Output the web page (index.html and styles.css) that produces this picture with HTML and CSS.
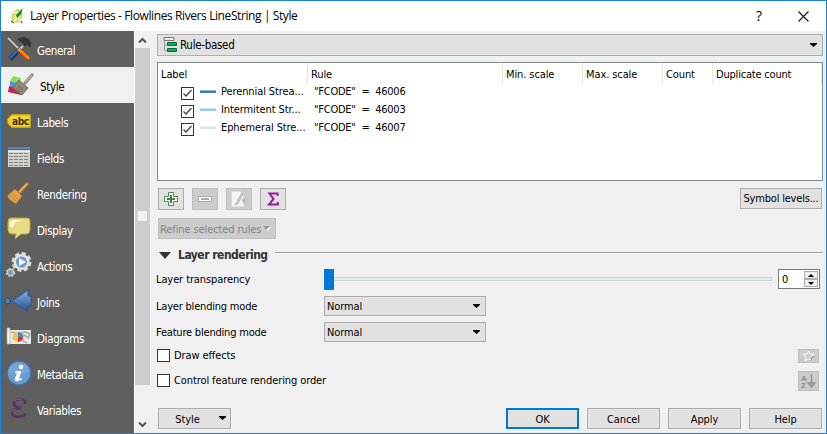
FILE: index.html
```html
<!DOCTYPE html>
<html lang="en">
<head>
<meta charset="utf-8">
<title>Layer Properties</title>
<link rel="stylesheet" href="styles.css">
</head>
<body>
<div class="window">
  <header class="titlebar">
    <svg class="app-icon" width="16" height="18" viewBox="0 0 16 18"><ellipse cx="7" cy="9" rx="4.8" ry="6.5" transform="rotate(18 7 9)" fill="#dce66e" stroke="#a5b84a" stroke-width=".6"/><path d="M4 15L8 7M3 5l5 1M8 12l4 1" stroke="#f6f8d0" stroke-width="1.5"/><path d="M13 1L6 8l1 3 4-4z" fill="#15842b"/><path d="M1 14l3 2M11 14l1 2" stroke="#57612a" stroke-width="1.3"/></svg>
    <span class="title">Layer Properties - Flowlines Rivers LineString | Style</span>
    <span class="help">?</span>
    <svg class="close" width="11" height="11" viewBox="0 0 11 11"><path d="M.5.5l10 10M10.500.5l-10 10" stroke="#111" stroke-width="1.1"/></svg>
  </header>
  <div class="body">
    <nav class="sidebar">
      <div class="item"><svg width="26" height="26" viewBox="0 0 26 26"><path d="M2 2l10 10" stroke="#d5d8da" stroke-width="1.6"/><path d="M17 10L7 20" stroke="#c9cdd0" stroke-width="2"/><path d="M12 3q6-3 10 0l3 4-1 4-3-3-2 2-2-3-2-1z" fill="#343638" stroke="#1f2021" stroke-width=".5"/><path d="M12 15L4 23" stroke="#183867" stroke-width="5"/><path d="M11 15L4 22" stroke="#3a70b5" stroke-width="2.200"/><path d="M13 14l10 9" stroke="#bd4700" stroke-width="4.600"/><path d="M13 13.500l10 9" stroke="#ff8a20" stroke-width="2.400"/></svg><span>General</span></div>
      <div class="item active"><svg width="28" height="26" viewBox="0 0 28 26"><path d="M6 4l8 2-2 6-9-3z" fill="#8be04c"/><path d="M3 9l12 3-3 5-9-3z" fill="#5a92d6"/><path d="M2 14l13 3-1 6-13-3z" fill="#b92a4e"/><path d="M12 8l9 8-6 7-9-7z" fill="#8f8b78" stroke="#716e60"/><path d="M11 14l5 4M9 16l5 4" stroke="#656356"/><path d="M18 11L25 3" stroke="#8e8a74" stroke-width="3.400" stroke-linecap="round"/><path d="M18 10L25 3" stroke="#bcb79e" stroke-width="1.200"/></svg><span>Style</span></div>
      <div class="item"><svg width="26" height="26" viewBox="0 0 26 26"><path d="M6 7h18v12H6l-4-4v-4z" fill="#f2d331" stroke="#e6bd00" stroke-width="1.300" stroke-linejoin="round"/><text x="6" y="16.500" class="abc">abc</text></svg><span>Labels</span></div>
      <div class="item"><svg width="26" height="26" viewBox="0 0 26 26"><path d="M2 3h22v20H2z" fill="#d1d1cc"/><path d="M2 3h22v3H2z" fill="#416ca9"/><path d="M2 4h22" stroke="#6e9cd3"/><path d="M2 7.500h22" stroke="#f0f0ed"/><path d="M3 9.500h20M3 12.500h20M3 15.500h20M3 18.500h20M3 21.500h20" stroke="#83847f" stroke-dasharray="4 1"/></svg><span>Fields</span></div>
      <div class="item"><svg width="26" height="26" viewBox="0 0 26 26"><path d="M13 13L21 4" stroke="#ad742c" stroke-width="3.600" stroke-linecap="round"/><path d="M13 12L21 4" stroke="#edb866" stroke-width="1.600" stroke-linecap="round"/><path d="M9 9l7 7-6 8Q5 22 1 16z" fill="#dfa14d" stroke="#af742c"/><path d="M10 10l6 6M6 13l6 6M4 15l6 6" stroke="#ba7d32" stroke-width=".7"/></svg><span>Rendering</span></div>
      <div class="item"><svg width="26" height="26" viewBox="0 0 26 26"><path d="M5 2h16q3 0 3 3v9q0 4-4 4h-5l-6 5 1-5H6q-4 0-4-4V6q0-4 3-4z" fill="#e8db86" stroke="#bca537"/><path d="M4 10q0-7 7-6h7q-11 0-11 8z" fill="#fffdea"/></svg><span>Display</span></div>
      <div class="item gears"><svg width="28" height="28" viewBox="0 0 28 28"><circle cx="16.500" cy="11" r="8.800" fill="none" stroke="#d9d9d5" stroke-width="2.400" stroke-dasharray="4.200 2.700"/><circle cx="16.500" cy="11" r="6.800" fill="#699ad0" stroke="#e4e4df" stroke-width="2.600"/><path d="M14 7l7 4-7 4z" fill="#fff"/><circle cx="5.500" cy="21.500" r="4" fill="none" stroke="#c2c2be" stroke-width="1.500" stroke-dasharray="2 1.300"/><circle cx="5.500" cy="21.500" r="3" fill="#6b9bcc" stroke="#c7c7c2" stroke-width="1.300"/></svg><span>Actions</span></div>
      <div class="item join"><svg width="28" height="26" viewBox="0 0 28 26"><defs><linearGradient id="join" x1="0" y1="0" x2="0" y2="1"><stop stop-color="#83b4e4"/><stop offset="1" stop-color="#244d8b"/></linearGradient></defs><path d="M7 13h4" stroke="#355d91" stroke-width="1.600"/><circle cx="3.600" cy="13" r="3" fill="#4b7db7" stroke="#294e80"/><path d="M8 13L24 2v6h3v10h-3v6z" fill="url(#join)" stroke="#2a5799"/></svg><span>Joins</span></div>
      <div class="item"><svg width="26" height="26" viewBox="0 0 26 26"><path d="M3 6h22v14H3z" fill="#e7e7e3"/><path d="M5 8l4 1 1 3-3 3M15 9l4-1 5 2-2 4-4-3-2 2 1 4 4 2" fill="none" stroke="#afb0aa" stroke-width="1.800"/><path d="M1 4h3v16H1z" fill="#f5f5f2" stroke="#aaa" stroke-width=".7"/><circle cx="12" cy="13" r="5" fill="#f2c939"/><path d="M12 13V8q5 0 5 5z" fill="#4b83c4"/><path d="M12 13h5q0 4-5 5z" fill="#e62d35"/></svg><span>Diagrams</span></div>
      <div class="item"><svg width="26" height="26" viewBox="0 0 26 26"><circle cx="13" cy="13" r="11.800" fill="#699bd3" stroke="#3d73b1" stroke-width="1.200"/><path d="M3 12Q4 3 13 3t10 9q-8 4-20 0z" fill="#80addd" opacity=".6"/><circle cx="15" cy="7" r="2.200" fill="#fff"/><path d="M10 11h5.500l-2.500 8 3-1v1.500l-5 2q-3-.5-2-3.500l2-5h-2z" fill="#fff"/></svg><span>Metadata</span></div>
      <div class="item"><svg width="26" height="26" viewBox="0 0 26 26"><path d="M19 8V5Q14 2 9 5q-4 5 6 7H13Q5 13 6 18q4 5 13 1v-2" fill="none" stroke="#5d3269" stroke-width="2.600"/><path d="M8 5q3-3 8-1M6 16q0-2 4-3" fill="none" stroke="#94669e" stroke-width=".8"/></svg><span>Variables</span></div>
    </nav>
    <div class="scrollbar">
      <svg class="up" width="9" height="7" viewBox="0 0 9 7"><path d="M1 5.500l3.500-3.500 3.500 3.500" fill="none" stroke="#555" stroke-width="2"/></svg>
      <div class="thumb"><i></i></div>
      <svg class="down" width="9" height="7" viewBox="0 0 9 7"><path d="M1 1.500l3.500 3.500 3.500-3.500" fill="none" stroke="#555" stroke-width="2"/></svg>
    </div>
    <main class="main">
      <div class="combo renderer"><svg width="15" height="16" viewBox="0 0 15 16"><path d="M1.500 4v9.500h3M1.500 8h3" fill="none" stroke="#999"/><path d="M1 .5h10v3H1z" fill="#e9e9e9" stroke="#777"/><path d="M4.500 5.500h9v3h-9zM4.500 11.500h9v3h-9z" fill="#00b45a" stroke="#096b3b"/></svg><span>Rule-based</span><svg class="arrow" width="7" height="4" viewBox="0 0 7 4"><path d="M0 0h7v1L3.500 4 0 1z"/></svg></div>
      <div class="rules">
        <div class="cols head"><span>Label</span><span>Rule</span><span>Min. scale</span><span>Max. scale</span><span>Count</span><span class="dup">Duplicate count</span></div>
        <div class="cols row"><div class="label"><b class="check on"><svg width="11" height="11" viewBox="0 0 11 11"><path d="M1.500 5.500l2.500 2.500 5.500-6"/></svg></b><i class="line perennial"></i><span>Perennial Strea...</span></div><span class="expr">"FCODE" &nbsp;=&nbsp; 46006</span></div>
        <div class="cols row"><div class="label"><b class="check on"><svg width="11" height="11" viewBox="0 0 11 11"><path d="M1.500 5.500l2.500 2.500 5.500-6"/></svg></b><i class="line intermittent"></i><span>Intermitent Str...</span></div><span class="expr">"FCODE" &nbsp;=&nbsp; 46003</span></div>
        <div class="cols row"><div class="label"><b class="check on"><svg width="11" height="11" viewBox="0 0 11 11"><path d="M1.500 5.500l2.500 2.500 5.500-6"/></svg></b><i class="line ephemeral"></i><span>Ephemeral Stre...</span></div><span class="expr">"FCODE" &nbsp;=&nbsp; 46007</span></div>
      </div>
      <div class="tools">
        <div class="tool"><svg width="16" height="16" viewBox="0 0 16 16"><path d="M5.500 1.500h5v4h4v5h-4v4h-5v-4h-4v-5h4z" fill="#fff" stroke="#4d8b50"/><path d="M8 4v8M4 8h8" stroke="#3e8645" stroke-width="2"/></svg></div>
        <div class="tool off"><svg width="16" height="16" viewBox="0 0 16 16"><path d="M1.500 5.500h13v5h-13z" fill="#f8f8f8" stroke="#aaa"/><path d="M4 8h8" stroke="#aaa" stroke-width="2"/></svg></div>
        <div class="tool off"><svg width="18" height="16" viewBox="0 0 18 16"><path d="M1.500.5h9l3 4v11h-12z" fill="#f5f5f5" stroke="#dcdcdc"/><path d="M5 14L12 2M5 14l3-2 5-9" fill="none" stroke="#b9b9b9" stroke-width="1.300"/><path d="M12 9h4M14 7v5" stroke="#b9b9b9" stroke-width="2"/></svg></div>
        <div class="tool"><svg width="16" height="16" viewBox="0 0 16 16"><path d="M12.500 5V2.500H4.500L8.500 8l-4.500 5.500h8.800V11" fill="none" stroke="#a113a1" stroke-width="2"/></svg></div>
        <div class="button levels"><span>Symbol levels...</span></div>
      </div>
      <div class="button refine"><span>Refine selected rules</span><svg width="8" height="6" viewBox="0 0 8 6"><path d="M1 1h7L4.500 5z" fill="#fff"/><path d="M0 0h7L3.500 4z" fill="#999"/></svg></div>
      <div class="group"><svg width="12" height="7" viewBox="0 0 12 7"><path d="M0 0h12L6 7z" fill="#333"/></svg><span>Layer rendering</span><i></i></div>
      <div class="field transparency"><span class="name">Layer transparency</span><div class="slider"><b></b><i></i></div><div class="spin"><span>0</span><div class="steps"><i><svg width="6" height="3" viewBox="0 0 6 3"><path d="M0 3L3 0l3 3z"/></svg></i><i><svg width="6" height="3" viewBox="0 0 6 3"><path d="M0 0h6L3 3z"/></svg></i></div></div></div>
      <div class="field blend"><span class="name">Layer blending mode</span><div class="combo"><span>Normal</span><svg class="arrow" width="7" height="4" viewBox="0 0 7 4"><path d="M0 0h7v1L3.500 4 0 1z"/></svg></div></div>
      <div class="field blend"><span class="name">Feature blending mode</span><div class="combo"><span>Normal</span><svg class="arrow" width="7" height="4" viewBox="0 0 7 4"><path d="M0 0h7v1L3.500 4 0 1z"/></svg></div></div>
      <div class="option effects"><b class="check"></b><span>Draw effects</span><div class="mini"><svg width="14" height="12" viewBox="0 0 14 12"><path d="M6.500 1l1.500 3 4 .3-3 2.500 1 4-3.500-2-3.500 2 1-4L1 4.300 5 4z" fill="#ccc" stroke="#fafafa"/><path d="M9 11l1-4h2" fill="none" stroke="#888"/></svg></div></div>
      <div class="option order"><b class="check"></b><span>Control feature rendering order</span><div class="mini"><svg width="17" height="16" viewBox="0 0 17 16"><text x="1" y="7.500" class="az">A</text><text x="1" y="15" class="az">Z</text><path d="M11.500 1v9M8 10h7l-3.500 4z" fill="#aaa" stroke="#929292" stroke-width="1.300"/></svg></div></div>
      <footer class="actions"><div class="button style"><span>Style</span><svg width="7" height="4" viewBox="0 0 7 4"><path d="M0 0h7v1L3.500 4 0 1z"/></svg></div><div class="button ok"><span>OK</span></div><div class="button"><span>Cancel</span></div><div class="button"><span>Apply</span></div><div class="button"><span>Help</span></div></footer>
    </main>
  </div>
</div>
</body>
</html>
```
FILE: styles.css
```css
* { box-sizing: border-box; }
body { margin: 0; font: 11px/14px "DejaVu Sans Condensed", "DejaVu Sans", sans-serif; font-stretch: condensed; color: #000; letter-spacing: -.1px; }
svg { display: block; flex: none; }
span { white-space: nowrap; }
.window { width: 827px; height: 434px; border: 1px solid #1a82d6; background: #f0f0f0; display: flex; flex-direction: column; overflow: hidden; }
.titlebar { height: 30px; flex: none; background: #fff; display: flex; align-items: center; padding: 0 17px 0 9px; }
.title { margin-left: 4px; font: 12px/16px "Open Sans", sans-serif; letter-spacing: -.4px; }
.help { margin-left: auto; margin-right: 36px; font: 14px/16px "Open Sans", sans-serif; }
.body { display: flex; flex: 1; min-height: 0; }
.sidebar { width: 134px; flex: none; background: #5f5f5f; border-right: 1px solid #fff; color: #fff; font-size: 11.5px; letter-spacing: -.35px; }
.item { height: 36px; display: flex; align-items: center; padding: 2px 0 0 5px; }
.item svg { margin-top: -2px; }
.item span { margin-left: auto; width: 97px; padding-top: 1px; }
.item.active { background: #f0f0f0; color: #000; padding-left: 6px; }
.item.active span { width: 94px; }
.gears { padding-left: 4px; }
.join { padding-left: 3px; }
.abc { font: bold 10px "DejaVu Sans Condensed", sans-serif; fill: #393313; letter-spacing: -.4px; }
.scrollbar { width: 15px; flex: none; display: flex; flex-direction: column; align-items: center; }
.up { margin: 6px 0 4px; }
.thumb { width: 15px; height: 337px; background: #cdcdcd; display: flex; justify-content: center; padding-top: 163px; }
.thumb i { width: 9px; height: 10px; background: #f0f0f0; }
.down { margin-top: 36px; }
.main { flex: 1; padding: 3px 3px 0 7px; min-width: 0; display: flex; flex-direction: column; align-items: stretch; }
.main > * { flex: none; }
.combo { border: 1px solid #adadad; background: #e1e1e1; display: flex; align-items: center; }
.combo .arrow { margin-left: auto; }
.renderer { height: 22px; padding: 0 5px 0 5px; font-size: 11.5px; letter-spacing: -.3px; }
.renderer span { margin-left: 2px; }
.rules { margin-top: 6px; height: 119px; border: 1px solid #828790; background: #fff; }
.cols { display: grid; grid-template-columns: 150px 195px 80px 80px 50px 109px; }
.head { height: 21px; margin-bottom: -2px; }
.head span { border-right: 1px solid #e5e5e5; padding: 5px 0 0 3px; }
.head .dup { letter-spacing: -.2px; }
.row { height: 18px; }
.label { display: flex; align-items: center; padding-left: 23px; }
.label span { margin: 1px 0 0 5px; }
.check { width: 13px; height: 13px; border: 1px solid #333; background: #fff; flex: none; }
.check path { fill: none; stroke: #444; stroke-width: 1.3; }
.label .check { margin-top: 4px; }
.line { width: 16px; height: 3px; margin: 1px 0 0 6px; border-top: 1px solid; }
.perennial { background: #3182bd; border-color: #87b3d4; }
.intermittent { background: #9ecae1; border-color: #c9e0eb; }
.ephemeral { background: #dbe5ed; border-color: #edf1f5; }
.expr { padding: 3px 0 0 6px; letter-spacing: -.25px; }
.tools { margin-top: 7px; padding: 0 1px; display: flex; gap: 8px; }
.tool { width: 26px; height: 22px; border: 1px solid #adadad; background: #e1e1e1; display: flex; align-items: center; justify-content: center; }
.off { background: #ccc; border-color: #bfbfbf; }
.button { height: 21px; width: 73px; border: 1px solid #adadad; background: #e1e1e1; display: flex; align-items: center; justify-content: center; padding-top: 1px; }
.levels { width: 82px; margin-left: auto; letter-spacing: -.2px; }
.refine { width: 118px; margin: 8px 0 0 1px; padding-top: 2px; background: #ccc; border-color: #bfbfbf; color: #858585; justify-content: flex-start; padding-left: 1px; }
.refine svg { margin: -2px 0 0 2px; }
.group { height: 16px; margin-top: 8px; display: flex; align-items: center; padding-left: 2px; font-weight: bold; font-size: 12px; letter-spacing: -.5px; color: #333; }
.group svg { margin-right: 7px; }
.group i { height: 2px; margin: -5px 0 0 7px; flex: 1; border-top: 1px solid #a0a0a0; background: #fff; }
.field { display: flex; align-items: center; }
.name { width: 168px; margin-left: -1px; flex: none; padding-top: 1px; }
.transparency { height: 22px; margin-top: 5px; }
.transparency .name { padding-top: 2px; }
.blend .name { letter-spacing: -.2px; }
.slider { width: 448px; display: flex; align-items: center; }
.slider b { width: 10px; height: 21px; background: #0078d7; }
.slider i { flex: 1; height: 4px; background: #e7eaea; border: 1px solid #d0d5d5; border-left: 0; }
.spin { width: 42px; height: 20px; margin-left: 6px; border: 1px solid #7a7a7a; background: #fff; display: flex; align-items: center; justify-content: space-between; padding: 0 1px 0 3px; }
.spin span { padding-top: 2px; }
.steps { width: 14px; }
.steps i { height: 8px; border: 1px solid #adadad; background: #f0f0f0; display: flex; align-items: center; justify-content: center; }
.blend { margin-top: 6px; height: 20px; }
.blend .combo { width: 162px; height: 20px; padding: 0 5px 0 2px; }
.blend .combo span { padding-top: 1px; }
.option { display: flex; align-items: center; height: 14px; margin-top: 7px; }
.option .check { margin-top: -1px; }
.option span { margin-left: 4px; }
.mini { width: 21px; height: 14px; margin: 0 4px 0 auto; border: 1px solid #bfbfbf; background: #ccc; display: flex; align-items: center; justify-content: center; }
.order { height: 20px; margin-top: 8px; }
.order .mini { height: 20px; }
.az { font: bold 8px "Liberation Sans", sans-serif; fill: #8a8a8a; }
.actions { display: flex; gap: 8px; margin-top: 17px; padding: 0 1px; }
.actions .button { padding-top: 2px; }
.actions .style { margin-right: auto; padding-left: 12px; }
.style svg { margin: -3px 0 0 19px; }
.actions .ok { border: 2px solid #0078d7; }
```
